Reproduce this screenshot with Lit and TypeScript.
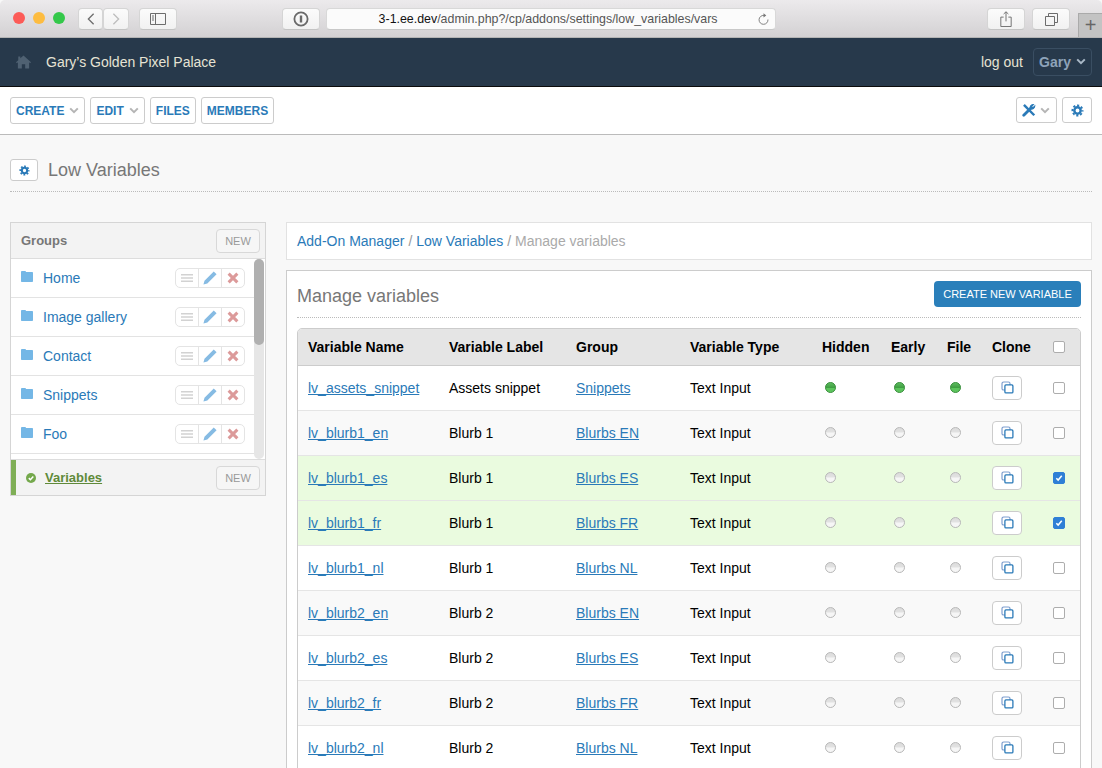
import { LitElement, css, html } from "lit";
import { customElement } from "lit/decorators.js";
import { classMap } from "lit/directives/class-map.js";

const chevron = html`<svg class="chev" viewBox="0 0 10 7"><path d="M1.2 1.400 5 5.200 8.800 1.400" fill="none" stroke="currentColor" stroke-width="2"/></svg>`;

const gear = html`<svg class="gear" viewBox="0 0 16 16">
  <circle cx="8" cy="8" r="3.9" fill="none" stroke="currentColor" stroke-width="3"/>
  <circle cx="8" cy="8" r="6.2" fill="none" stroke="currentColor" stroke-width="2.4" stroke-dasharray="2.6 2.27" stroke-dashoffset="1.3"/>
</svg>`;

const tools = html`<svg class="tools" viewBox="0 0 16 16" fill="none" stroke="#2a7ab8">
  <path d="M2.200 2.200 14 14" stroke-width="2.800"/>
  <path d="M2 14 10 6" stroke-width="3.200" stroke-linecap="round"/>
  <path d="M9.200 5.600A3.700 3.700 0 0 1 13 1.800L11 4.200l1.200 1.400 2.400-2.100a3.700 3.700 0 0 1-4.200 3.400z" fill="#2a7ab8" stroke-width="1.200"/>
</svg>`;

const folder = html`<svg class="folder" viewBox="0 0 12 11"><path d="M0 1.200C0 .5.4 0 1 0h3c.6 0 .8.3 1 1h6c.6 0 1 .4 1 1v8c0 .6-.4 1-1 1H1c-.6 0-1-.4-1-1z" fill="#74b7e6"/></svg>`;

const cloneIcon = html`<svg class="clone" viewBox="0 0 13 13" fill="none">
  <rect x="1" y="1" width="8" height="8" rx="1.6" stroke="#7f9fd0" stroke-width="1.2"/>
  <rect x="3.9" y="3.9" width="8" height="8" rx="1" fill="#fff" stroke="#2a7ab8" stroke-width="1.3"/>
</svg>`;

@customElement("row-tools")
export class RowTools extends LitElement {
  protected render() {
    return html`
      <span class="seg">
        <svg viewBox="0 0 13 9"><path d="M0 1h13M0 4.500h13M0 8h13" stroke="#d2d2d2" stroke-width="1.500"/></svg>
      </span>
      <span class="seg">
        <svg class="pen" viewBox="0 0 13 13"><path d="M10 .4 12.600 3 4 11.600.4 12.600 1.400 9z" fill="#86bbe3"/></svg>
      </span>
      <span class="seg">
        <svg viewBox="0 0 11 11"><path d="M1.500 1.500 9.500 9.500M9.500 1.500 1.500 9.500" stroke="#dc9a9a" stroke-width="2.800"/></svg>
      </span>
    `;
  }

  static styles = css`
    :host {
      display: flex;
      inline-size: 70px;
      block-size: 20px;
      box-sizing: border-box;
      border: 1px solid #e4e4e4;
      border-radius: 5px;
      background: #fff;
    }
    .seg {
      flex: 1;
      display: flex;
      align-items: center;
      justify-content: center;
      border-inline-start: 1px solid #e4e4e4;
    }
    .seg:first-child {
      border-inline-start: none;
    }
    svg {
      inline-size: 12px;
      block-size: 12px;
    }
    .pen {
      inline-size: 14px;
      block-size: 14px;
    }
  `;
}

const groups = ["Home", "Image gallery", "Contact", "Snippets", "Foo"];

type Row = [string, string, string, boolean?, boolean?];
const rows: Row[] = [
  ["lv_assets_snippet", "Assets snippet", "Snippets", true],
  ["lv_blurb1_en", "Blurb 1", "Blurbs EN"],
  ["lv_blurb1_es", "Blurb 1", "Blurbs ES", false, true],
  ["lv_blurb1_fr", "Blurb 1", "Blurbs FR", false, true],
  ["lv_blurb1_nl", "Blurb 1", "Blurbs NL"],
  ["lv_blurb2_en", "Blurb 2", "Blurbs EN"],
  ["lv_blurb2_es", "Blurb 2", "Blurbs ES"],
  ["lv_blurb2_fr", "Blurb 2", "Blurbs FR"],
  ["lv_blurb2_nl", "Blurb 2", "Blurbs NL"],
];

@customElement("app-root")
export class AppRoot extends LitElement {
  private chrome() {
    return html`
      <div class="titlebar">
        <span class="light" style="background:#fc5b57"></span>
        <span class="light" style="background:#fdbc40"></span>
        <span class="light" style="background:#34c84a"></span>
        <div class="pair">
          <span class="cbtn w26">
            <svg class="i" viewBox="0 0 10 16"><path d="M8 2 2 8l6 6" fill="none" stroke="#6d6d6d" stroke-width="1.500"/></svg>
          </span>
          <span class="cbtn w26">
            <svg class="i" viewBox="0 0 10 16"><path d="m2 2 6 6-6 6" fill="none" stroke="#bdbdbd" stroke-width="1.500"/></svg>
          </span>
        </div>
        <span class="cbtn w38 side">
          <svg class="i wide" viewBox="0 0 16 12" fill="none" stroke="#6d6d6d"><path d="M.5.5h15v11H.5zM5.500.5v11M2 3h2M2 5h2M2 7h2"/></svg>
        </span>
        <span class="cbtn w38 pw">
          <svg class="i big" viewBox="0 0 16 16" fill="none"><circle cx="8" cy="8" r="6.600" stroke="#6a6a6a" stroke-width="1.800"/><path d="M8 4.500v7" stroke="#6a6a6a" stroke-width="2.400"/></svg>
        </span>
        <div class="url">
          <span class="addr"><b>3-1.ee.dev</b>/admin.php?/cp/addons/settings/low_variables/vars</span>
          <svg class="reload" viewBox="0 0 14 14" fill="none"><path d="M7.500 2.600A4.800 4.800 0 1 0 11.800 7" stroke="#777" stroke-width="1"/><path d="M7 .4 10 2.600 7 4.800z" fill="#777"/></svg>
        </div>
        <span class="cbtn w38 share">
          <svg class="i big" viewBox="0 0 12 17" fill="none" stroke="#6d6d6d"><path d="M3.500 6.500h-3v10h11v-10h-3M6 11V1M3.500 3.200 6 .8l2.500 2.400"/></svg>
        </span>
        <span class="cbtn w38 tabs">
          <svg class="i" viewBox="0 0 13 13" fill="none" stroke="#6d6d6d"><path d="M.5 3.500h9v9h-9zM3.500 3.500v-3h9v9h-3"/></svg>
        </span>
        <span class="plus">+</span>
      </div>
    `;
  }

  private nav() {
    return html`
      <nav>
        <svg class="home" viewBox="0 0 16 14"><path d="M8 0 16 7.200l-.9 1L14 7.300V14H9.800V9.400H6.200V14H2V7.300L.9 8.200 0 7.200 2.400 5V1h2.200v2.100z" fill="#4f6172"/></svg>
        <span class="site">Gary’s Golden Pixel Palace</span>
        <span class="logout">log out</span>
        <span class="user">Gary ${chevron}</span>
      </nav>
    `;
  }

  private toolbar() {
    return html`
      <div class="toolbar">
        <a class="tbtn">CREATE ${chevron}</a>
        <a class="tbtn">EDIT ${chevron}</a>
        <a class="tbtn">FILES</a>
        <a class="tbtn">MEMBERS</a>
        <a class="tbtn tool">${tools} ${chevron}</a>
        <a class="tbtn cog">${gear}</a>
      </div>
    `;
  }

  private sidebar() {
    return html`
      <aside>
        <div class="side-head">
          <span class="side-title">Groups</span>
          <span class="new">NEW</span>
        </div>
        <div class="side-list">
          <div class="side-rows">
            ${groups.map(
              (g) => html`
                <div class="side-row">
                  ${folder}
                  <a class="side-link">${g}</a>
                  <row-tools></row-tools>
                </div>
              `,
            )}
          </div>
          <div class="scroll"><div class="thumb"></div></div>
        </div>
        <div class="side-active">
          <svg class="ok" viewBox="0 0 10 10"><circle cx="5" cy="5" r="5" fill="#74a84c"/><path d="M2.800 5.100 4.400 6.700 7.300 3.600" fill="none" stroke="#fff" stroke-width="1.500"/></svg>
          <a class="active-link">Variables</a>
          <span class="new">NEW</span>
        </div>
      </aside>
    `;
  }

  private dot(on: boolean) {
    return html`<span class=${classMap({ dot: true, on })}></span>`;
  }

  private check(checked: boolean) {
    if (checked) {
      return html`<span class="cb checked"><svg viewBox="0 0 12 12"><path d="M2.800 6.200 5 8.500 9.300 3.400" fill="none" stroke="#fff" stroke-width="1.800"/></svg></span>`;
    }
    return html`<span class="cb"></span>`;
  }

  private table() {
    return html`
      <div class="table-wrap">
        <table>
          <colgroup>
            ${[141, 127, 114, 132, 69, 56, 45, 61, 37].map(
              (w) => html`<col style="width:${w}px" />`,
            )}
          </colgroup>
          <thead>
            <tr>
              <th>Variable Name</th>
              <th>Variable Label</th>
              <th>Group</th>
              <th>Variable Type</th>
              <th>Hidden</th>
              <th>Early</th>
              <th>File</th>
              <th>Clone</th>
              <th>${this.check(false)}</th>
            </tr>
          </thead>
          <tbody>
            ${rows.map(
              ([name, label, group, on, sel], i) => html`
                <tr class=${classMap({ alt: i % 2 === 1, sel: !!sel })}>
                  <td><a>${name}</a></td>
                  <td>${label}</td>
                  <td><a>${group}</a></td>
                  <td>Text Input</td>
                  <td>${this.dot(!!on)}</td>
                  <td>${this.dot(!!on)}</td>
                  <td>${this.dot(!!on)}</td>
                  <td><span class="clone-btn">${cloneIcon}</span></td>
                  <td>${this.check(!!sel)}</td>
                </tr>
              `,
            )}
          </tbody>
        </table>
      </div>
    `;
  }

  protected render() {
    return html`
      ${this.chrome()} ${this.nav()} ${this.toolbar()}
      <div class="heading">
        <a class="tbtn small">${gear}</a>
        <h1>Low Variables</h1>
      </div>
      <div class="columns">
        ${this.sidebar()}
        <main>
          <div class="crumbs">
            <a>Add-On Manager</a> <i>/</i> <a>Low Variables</a> <i>/</i>
            <span>Manage variables</span>
          </div>
          <section>
            <div class="sec-head">
              <h2>Manage variables</h2>
              <a class="create">CREATE NEW VARIABLE</a>
            </div>
            ${this.table()}
          </section>
        </main>
      </div>
    `;
  }

  static styles = css`
    :host {
      display: block;
      inline-size: 1102px;
      block-size: 768px;
      overflow: hidden;
      background: #f8f8f8;
      font-family: "Liberation Sans", Arial, sans-serif;
      font-size: 14px;
      color: #000;
    }

    /* browser window */
    .titlebar {
      block-size: 38px;
      box-sizing: border-box;
      display: flex;
      align-items: flex-start;
      padding-block-start: 8px;
      padding-inline-start: 13px;
      background: linear-gradient(#eceaec, #d3d1d3);
      border-block-end: 1px solid #b4b4b4;
      border-radius: 5px 5px 0 0;
    }
    .light {
      inline-size: 12px;
      block-size: 12px;
      border-radius: 50%;
      margin-block-start: 4px;
      margin-inline-end: 8px;
    }
    .pair {
      display: flex;
      margin-inline-start: 5px;
      inline-size: 51px;
    }
    .cbtn {
      block-size: 22px;
      box-sizing: border-box;
      display: flex;
      align-items: center;
      justify-content: center;
      background: linear-gradient(#fbfbfb, #f1f1f1);
      border: 1px solid #d5d5d5;
      border-block-end-color: #c4c4c4;
      border-radius: 4px;
    }
    .w26 {
      inline-size: 26px;
    }
    .w38 {
      inline-size: 38px;
    }
    .side {
      margin-inline-start: 10px;
    }
    .pw {
      margin-inline-start: 105px;
    }
    .share {
      margin-inline-start: 211px;
    }
    .tabs {
      margin-inline-start: 7px;
    }
    .i {
      inline-size: 10px;
      block-size: 14px;
    }
    .i.wide {
      inline-size: 16px;
      block-size: 12px;
    }
    .i.big {
      inline-size: 16px;
      block-size: 16px;
    }
    .tabs .i {
      inline-size: 13px;
      block-size: 13px;
    }
    .url {
      inline-size: 452px;
      block-size: 22px;
      margin-inline-start: 6px;
      box-sizing: border-box;
      display: flex;
      align-items: center;
      background: #fbfbfb;
      border: 1px solid #d8d8d8;
      border-block-end-color: #c8c8c8;
      border-radius: 4px;
      padding-inline-start: 52px;
      font-size: 12.4px;
      color: #555;
    }
    .addr {
      flex: 1;
      white-space: nowrap;
    }
    .addr b {
      font-weight: normal;
      color: #111;
    }
    .reload {
      inline-size: 13px;
      block-size: 13px;
      margin-inline-end: 5px;
    }
    .plus {
      margin-inline-start: 8px;
      margin-block-start: 5px;
      inline-size: 24px;
      block-size: 24px;
      background: #c3c3c3;
      border-inline-start: 1px solid #aaa;
      border-block-start: 1px solid #aaa;
      box-sizing: border-box;
      text-align: center;
      font-size: 20px;
      font-weight: 300;
      line-height: 22px;
      color: #666;
    }

    /* site nav */
    nav {
      block-size: 49px;
      box-sizing: border-box;
      display: flex;
      align-items: center;
      padding-inline: 16px 10px;
      padding-block-end: 1px;
      background: #27394b;
      border-block-end: 1px solid #0c0c0c;
    }
    .home {
      inline-size: 15px;
      block-size: 14px;
    }
    .site {
      margin-inline-start: 15px;
      flex: 1;
      color: #e6e3d4;
    }
    .logout {
      color: #e6e3d4;
    }
    .user {
      margin-inline-start: 10px;
      inline-size: 59px;
      block-size: 28px;
      box-sizing: border-box;
      display: flex;
      align-items: center;
      justify-content: center;
      gap: 5px;
      border: 1px solid #3a4e62;
      border-radius: 4px;
      color: #8ea3b9;
      font-weight: bold;
    }
    .user .chev {
      color: #a9b8c6;
    }
    .chev {
      inline-size: 10px;
      block-size: 7px;
      flex: none;
    }

    /* toolbar */
    .toolbar {
      block-size: 48px;
      box-sizing: border-box;
      display: flex;
      align-items: flex-start;
      gap: 5px;
      padding: 10px 10px 0;
      background: #fff;
      border-block-end: 1px solid #bbb;
    }
    .tbtn {
      block-size: 27px;
      box-sizing: border-box;
      display: flex;
      align-items: center;
      gap: 5px;
      padding-inline: 5px;
      background: #fff;
      border: 1px solid #ccc;
      border-radius: 3px;
      color: #2a7ab8;
      font-size: 12px;
      font-weight: bold;
    }
    .tbtn .chev {
      color: #b5b5b5;
    }
    .tool {
      margin-inline-start: auto;
      block-size: 26px;
      inline-size: 41px;
      gap: 4px;
    }
    .cog {
      block-size: 26px;
      inline-size: 30px;
      justify-content: center;
    }
    .gear {
      inline-size: 13px;
      block-size: 13px;
    }
    .tools {
      inline-size: 14px;
      block-size: 14px;
      flex: none;
    }
    .tbtn.small {
      block-size: 22px;
      inline-size: 28px;
      justify-content: center;
      padding: 0;
    }
    .tbtn.small .gear {
      inline-size: 11px;
      block-size: 11px;
    }

    /* page heading */
    .heading {
      margin: 24px 10px 0;
      block-size: 33px;
      display: flex;
      align-items: flex-start;
      gap: 10px;
      border-block-end: 1px dotted #bbb;
      box-sizing: border-box;
    }
    h1 {
      margin: 0;
      font-size: 18px;
      font-weight: normal;
      line-height: 22px;
      color: #777;
    }
    .columns {
      display: flex;
      align-items: flex-start;
      gap: 20px;
      margin: 30px 10px 0;
    }

    /* sidebar */
    aside {
      inline-size: 256px;
      flex: none;
      box-sizing: border-box;
      background: #fff;
      border: 1px solid #d5d5d5;
    }
    .side-head {
      block-size: 36px;
      box-sizing: border-box;
      display: flex;
      align-items: center;
      justify-content: space-between;
      padding-inline: 10px 5px;
      background: #f3f3f3;
      border-block-end: 1px solid #ddd;
    }
    .side-title {
      font-size: 13px;
      font-weight: bold;
      color: #777;
    }
    .new {
      inline-size: 44px;
      block-size: 24px;
      box-sizing: border-box;
      display: flex;
      align-items: center;
      justify-content: center;
      border: 1px solid #d8d8d8;
      border-radius: 4px;
      font-size: 11px;
      color: #999;
      background: #f6f6f6;
    }
    .side-list {
      display: flex;
      block-size: 200px;
      overflow: hidden;
      border-block-end: 1px solid #ddd;
    }
    .side-rows {
      flex: 1;
    }
    .side-row {
      block-size: 39px;
      box-sizing: border-box;
      display: flex;
      align-items: center;
      padding-inline: 10px 9px;
      border-block-end: 1px solid #e3e3e3;
    }
    .folder {
      inline-size: 12px;
      block-size: 11px;
      margin-block-end: 3px;
    }
    .side-link {
      flex: 1;
      margin-inline-start: 10px;
      color: #2a7ab8;
    }
    .scroll {
      inline-size: 10px;
      margin-inline-end: 1px;
      background: #e6e6e6;
      border-radius: 5px;
    }
    .thumb {
      block-size: 86px;
      background: #b0b0b0;
      border-radius: 5px;
    }
    .side-active {
      block-size: 35px;
      box-sizing: border-box;
      display: flex;
      align-items: center;
      padding-inline: 10px 5px;
      background: #f3f3f3;
      border-inline-start: 5px solid #7fae56;
    }
    .ok {
      inline-size: 10px;
      block-size: 10px;
    }
    .active-link {
      flex: 1;
      margin-inline-start: 9px;
      font-size: 13px;
      font-weight: bold;
      color: #5f8a3a;
      text-decoration: underline;
    }

    /* main column */
    main {
      inline-size: 806px;
      flex: none;
    }
    .crumbs {
      block-size: 38px;
      box-sizing: border-box;
      display: flex;
      align-items: center;
      gap: 4px;
      padding-inline: 10px;
      background: #fff;
      border: 1px solid #e2e2e2;
      color: #aaa;
    }
    .crumbs a {
      color: #2a7ab8;
    }
    .crumbs i {
      font-style: normal;
      color: #999;
    }
    section {
      margin-block-start: 10px;
      box-sizing: border-box;
      block-size: 600px;
      padding: 10px 10px 0;
      background: #fff;
      border: 1px solid #ccc;
    }
    .sec-head {
      block-size: 36px;
      display: flex;
      align-items: flex-start;
      justify-content: space-between;
      border-block-end: 1px dotted #bbb;
    }
    h2 {
      margin: 4px 0 0;
      font-size: 18px;
      font-weight: normal;
      line-height: 22px;
      color: #777;
    }
    .create {
      inline-size: 147px;
      block-size: 26px;
      display: flex;
      align-items: center;
      justify-content: center;
      background: #2a7fba;
      border-radius: 4px;
      color: #fff;
      font-size: 11px;
    }

    /* table */
    .table-wrap {
      margin-block-start: 10px;
      border: 1px solid #ccc;
      border-radius: 5px 5px 0 0;
      overflow: hidden;
    }
    table {
      inline-size: 782px;
      table-layout: fixed;
      border-collapse: collapse;
    }
    th {
      block-size: 36px;
      padding: 0 0 0 10px;
      box-sizing: border-box;
      text-align: start;
      background: #e5e5e5;
      border-block-end: 1px solid #ccc;
      font-weight: bold;
    }
    td {
      block-size: 45px;
      padding: 0 0 0 10px;
      box-sizing: border-box;
      border-block-end: 1px solid #e5e5e5;
    }
    tr.alt td {
      background: #f9f9f9;
    }
    tr.sel td {
      background: #eafbdf;
    }
    td a {
      color: #2a7ab8;
      text-decoration: underline;
    }
    .dot {
      display: block;
      inline-size: 11px;
      block-size: 11px;
      margin-inline-start: 3px;
      box-sizing: border-box;
      border-radius: 50%;
      border: 1px solid #b8b8b8;
      background: linear-gradient(#dcdcdc, #e2e2e2 45%, #f6f6f6 55%);
    }
    .dot.on {
      border-color: #3a8f3d;
      background: linear-gradient(#5dbb5f, #3f9f42 50%, #5cc45c 60%);
    }
    .clone-btn {
      inline-size: 30px;
      block-size: 24px;
      box-sizing: border-box;
      display: flex;
      align-items: center;
      justify-content: center;
      background: #fff;
      border: 1px solid #ccc;
      border-radius: 4px;
    }
    .clone {
      inline-size: 13px;
      block-size: 13px;
    }
    .cb {
      display: block;
      inline-size: 12px;
      block-size: 12px;
      box-sizing: border-box;
      background: #fff;
      border: 1px solid #adadad;
      border-radius: 2px;
    }
    .cb.checked {
      background: #2f7fd6;
      border-color: #2f7fd6;
    }
    .cb svg {
      display: block;
      inline-size: 10px;
      block-size: 10px;
    }
  `;
}
